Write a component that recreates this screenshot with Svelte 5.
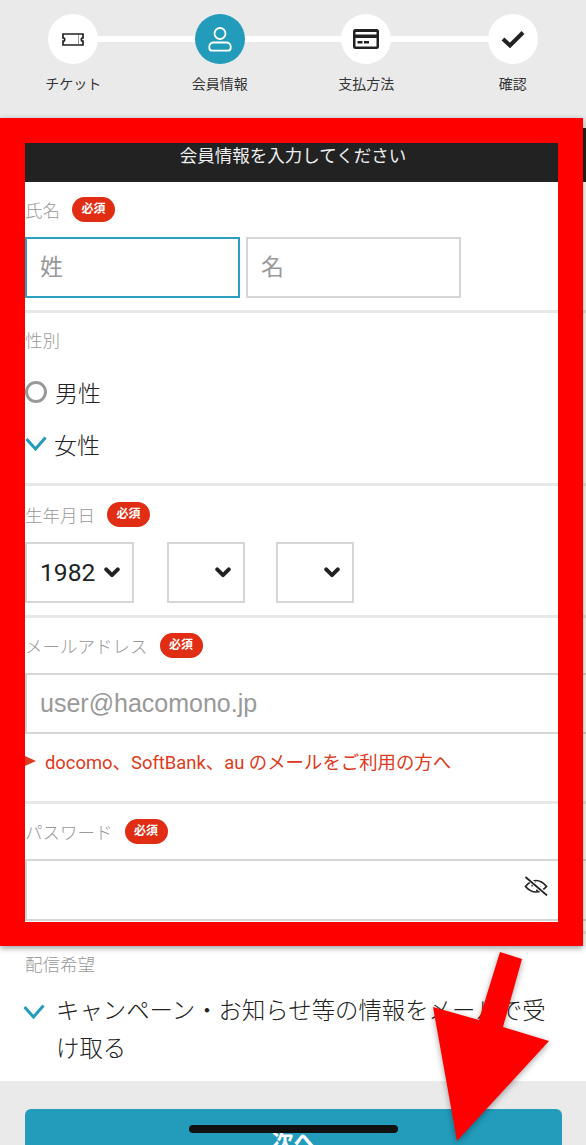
<script>
	const steps = [
		{ label: 'チケット', icon: 'ticket' },
		{ label: '会員情報', icon: 'user', active: true },
		{ label: '支払方法', icon: 'card' },
		{ label: '確認', icon: 'check' }
	];
</script>

{#snippet chevron()}
	<svg class="chevron" width="16" height="11" viewBox="0 0 18 12" aria-hidden="true">
		<path d="M2.5 2.5 9 9l6.5-6.5" fill="none" stroke="#222" stroke-width="4.4" stroke-linecap="round" stroke-linejoin="round" />
	</svg>
{/snippet}

{#snippet tick()}
	<svg class="tick" width="22" height="16" viewBox="0 0 22 16" aria-hidden="true">
		<path d="M1.5 3 10.5 13 20.5 1.5" fill="none" stroke="#239cbc" stroke-width="3" />
	</svg>
{/snippet}

<div class="page">
	<nav class="steps">
		{#each steps as step}
			<div class="step">
				<div class="circle" class:active={step.active}>
					{#if step.icon === 'ticket'}
						<svg width="22" height="13" viewBox="0 0 22 13" aria-hidden="true">
							<path d="M1 1h20v3.800a1.700 1.700 0 0 0 0 3.400V12H1V8.200a1.700 1.700 0 0 0 0-3.400z" fill="#fff" stroke="#222" stroke-width="1.700" />
							<path d="M16.500 2v9" stroke="#999" stroke-width="1" />
						</svg>
					{:else if step.icon === 'user'}
						<svg width="24" height="26" viewBox="0 0 24 26" aria-hidden="true">
							<circle cx="12" cy="7.500" r="5.500" fill="none" stroke="#fff" stroke-width="1.800" />
							<path d="M5.500 16.500h13a4.200 4.200 0 0 1 4.200 4.200v1a3 3 0 0 1-3 3H4.300a3 3 0 0 1-3-3v-1a4.200 4.200 0 0 1 4.200-4.200z" fill="none" stroke="#fff" stroke-width="1.800" />
						</svg>
					{:else if step.icon === 'card'}
						<svg width="26" height="20" viewBox="0 0 26 20" aria-hidden="true">
							<path fill-rule="evenodd" fill="#222" d="M2.500 0h21A2.500 2.500 0 0 1 26 2.500v15a2.500 2.500 0 0 1-2.500 2.500h-21A2.500 2.500 0 0 1 0 17.500v-15A2.500 2.500 0 0 1 2.500 0zM2.500 3v2.500h21V3zM2.500 9v8.500h21V9zM4.500 12h5v2.500h-5zM11 12h5v2.500h-5z" />
						</svg>
					{:else}
						<svg width="24" height="18" viewBox="0 0 24 18" aria-hidden="true">
							<path d="M2 9l7 6.500L22 2.500" fill="none" stroke="#222" stroke-width="4" />
						</svg>
					{/if}
				</div>
				<span class="step-label">{step.label}</span>
			</div>
		{/each}
	</nav>

	<h1 class="title">会員情報を入力してください</h1>

	<form class="form">
		<section class="name">
			<div class="label">氏名<span class="req">必須</span></div>
			<div class="row">
				<input class="field half focus" placeholder="姓" />
				<input class="field half" placeholder="名" />
			</div>
		</section>

		<section class="gender">
			<div class="label">性別</div>
			<div class="option"><span class="radio"></span>男性</div>
			<div class="option">{@render tick()}女性</div>
		</section>

		<section class="birth">
			<div class="label">生年月日<span class="req">必須</span></div>
			<div class="row selects">
				<div class="select year">1982{@render chevron()}</div>
				<div class="select">{@render chevron()}</div>
				<div class="select">{@render chevron()}</div>
			</div>
		</section>

		<section class="mail">
			<div class="label">メールアドレス<span class="req">必須</span></div>
			<input class="field wide" placeholder="user@hacomono.jp" />
			<div class="note"><span class="arrow"></span>docomo、SoftBank、au のメールをご利用の方へ</div>
		</section>

		<section class="password">
			<div class="label">パスワード<span class="req">必須</span></div>
			<div class="pw-box">
				<svg class="eye" width="24" height="20" viewBox="0 0 24 20" aria-hidden="true">
					<path d="M1.500 10.500C5 6 8.500 4.500 12 4.500s7 1.500 10.500 6C19 14.500 15.500 16 12 16s-7-1.500-10.500-5.500z" fill="none" stroke="#222" stroke-width="1.700" />
					<path d="M8 10.500a4 4 0 0 1 4-4M16 10.500a4 4 0 0 1-4 4" fill="none" stroke="#222" stroke-width="1.500" />
					<path d="M2.500 1 22.500 19" stroke="#fff" stroke-width="4" />
					<path d="M1.500 1 23 19.500" stroke="#222" stroke-width="1.700" />
				</svg>
			</div>
		</section>

		<section class="delivery">
			<div class="label">配信希望</div>
			<div class="consent">{@render tick()}<span>キャンペーン・お知らせ等の情報をメールで受け取る</span></div>
		</section>
	</form>

	<footer class="foot">
		<button type="button" class="next">次へ</button>
	</footer>

	<div class="home-bar"></div>

	<div class="frame"></div>
	<svg class="big-arrow" width="586" height="1145" viewBox="0 0 586 1145" aria-hidden="true">
		<polygon points="500,952 522,959 503,1027 549,1041 457,1141 433,1007 479,1020" fill="#ff0000" />
	</svg>
</div>

<style>
	:global(body) {
		margin: 0;
		background: #fff;
	}
	.page {
		position: relative;
		width: 586px;
		height: 1145px;
		overflow: hidden;
		background: #eaeaea;
		font-family: Roboto, 'Noto Sans CJK JP', sans-serif;
		color: #222;
	}
	.steps {
		display: flex;
		height: 128px;
		padding-top: 14px;
		box-sizing: border-box;
	}
	.step {
		position: relative;
		flex: 1;
		display: flex;
		flex-direction: column;
		align-items: center;
	}
	.step::before {
		content: '';
		position: absolute;
		top: 22px;
		left: 50%;
		width: 100%;
		height: 6px;
		background: #fff;
	}
	.step:last-child::before {
		display: none;
	}
	.circle {
		position: relative;
		width: 50px;
		height: 50px;
		border-radius: 50%;
		background: #fff;
		display: flex;
		align-items: center;
		justify-content: center;
	}
	.circle.active {
		background: #239cbc;
	}
	.step-label {
		margin-top: 10px;
		font-size: 14px;
		line-height: 20px;
		color: #333;
	}
	.title {
		margin: 0;
		height: 54px;
		background: #222;
		color: #eee;
		font-size: 17.500px;
		font-weight: 400;
		line-height: 56px;
		text-align: center;
	}
	.form {
		background: #fff;
		height: 899px;
	}
	section {
		box-sizing: border-box;
		padding-left: 25px;
		border-bottom: 3px solid #e8e8e8;
	}
	.name {
		height: 131px;
		padding-top: 14px;
	}
	.gender {
		height: 173px;
		padding-top: 13px;
	}
	.birth {
		height: 132px;
		padding-top: 15px;
	}
	.mail {
		height: 186px;
		padding-top: 14px;
	}
	.password {
		height: 130px;
		padding-top: 14px;
	}
	.delivery {
		border-bottom: 0;
		padding-top: 16px;
	}
	.label {
		display: flex;
		align-items: center;
		height: 26px;
		font-size: 17.500px;
		font-weight: 300;
		color: #999;
	}
	.req {
		margin-left: 12px;
		width: 43px;
		height: 25px;
		border-radius: 13px;
		background: #e02d14;
		color: #fff;
		font-size: 12px;
		font-weight: 700;
		line-height: 25px;
		text-align: center;
	}
	.row {
		display: flex;
		gap: 6px;
		margin-top: 15px;
	}
	.field {
		display: block;
		box-sizing: border-box;
		height: 61px;
		padding: 0 13px;
		border: 2px solid #d6d6d6;
		border-radius: 0;
		background: #fff;
		outline: 0;
		font: inherit;
		font-size: 23px;
		color: #222;
	}
	.field::placeholder {
		color: #999;
		opacity: 1;
	}
	.half {
		width: 215px;
	}
	.focus {
		border-color: #2a9fc0;
	}
	.wide {
		width: 561px;
		margin-top: 15px;
		border-right: 0;
		font-family: 'Liberation Sans', 'Noto Sans CJK JP', sans-serif;
		font-size: 25px;
	}
	.option {
		display: flex;
		align-items: center;
		height: 52px;
		font-size: 23px;
		font-weight: 300;
	}
	.gender .label {
		margin-bottom: 14px;
	}
	.radio {
		box-sizing: border-box;
		width: 22px;
		height: 22px;
		margin-right: 8px;
		border: 3px solid #999;
		border-radius: 50%;
	}
	.tick {
		flex: none;
		margin-right: 7px;
	}
	.selects {
		gap: 31px;
		margin-top: 15px;
	}
	.select {
		box-sizing: border-box;
		display: flex;
		align-items: center;
		justify-content: flex-end;
		width: 78px;
		height: 61px;
		padding-right: 12px;
		border: 2px solid #d6d6d6;
		font-size: 24.600px;
	}
	.select.year {
		width: 109px;
		margin-right: 2px;
		justify-content: space-between;
		padding-left: 13px;
	}
	.note {
		display: flex;
		align-items: center;
		height: 54px;
		font-size: 18.400px;
		color: #dd3a20;
	}
	.arrow {
		flex: none;
		width: 0;
		height: 0;
		margin-right: 9px;
		border-left: 11px solid #dd3a20;
		border-top: 5.500px solid transparent;
		border-bottom: 5.500px solid transparent;
	}
	.pw-box {
		position: relative;
		box-sizing: border-box;
		width: 561px;
		height: 62px;
		margin-top: 15px;
		border: 2px solid #d6d6d6;
		border-right: 0;
	}
	.eye {
		position: absolute;
		top: 15px;
		right: 38px;
	}
	.consent {
		display: flex;
		align-items: flex-start;
		margin-top: 16px;
		padding-right: 34px;
		font-size: 23.400px;
		font-weight: 300;
		line-height: 38px;
	}
	.consent .tick {
		margin: 12px 11px 0 -2px;
	}
	.foot {
		box-sizing: border-box;
		position: absolute;
		top: 1081px;
		left: 0;
		width: 100%;
		height: 64px;
		padding: 28px 24px 0 25px;
		background: #eaeaea;
	}
	.next {
		display: block;
		width: 100%;
		height: 60px;
		padding: 0;
		border: 0;
		border-radius: 6px;
		background: #239cbc;
		color: #fff;
		font: inherit;
		font-size: 22px;
		font-weight: 700;
	}
	.home-bar {
		position: absolute;
		top: 1125px;
		left: 189px;
		width: 209px;
		height: 8px;
		border-radius: 4px;
		background: #111;
	}
	.frame {
		position: absolute;
		top: 118px;
		left: 0;
		width: 583px;
		height: 828px;
		box-sizing: border-box;
		border: 25px solid #ff0000;
		border-bottom-width: 24px;
		box-shadow: 0 2px 6px rgba(0, 0, 0, 0.4);
	}
	.big-arrow {
		position: absolute;
		top: 0;
		left: 0;
		filter: drop-shadow(0 2px 3px rgba(0, 0, 0, 0.35));
	}
</style>
